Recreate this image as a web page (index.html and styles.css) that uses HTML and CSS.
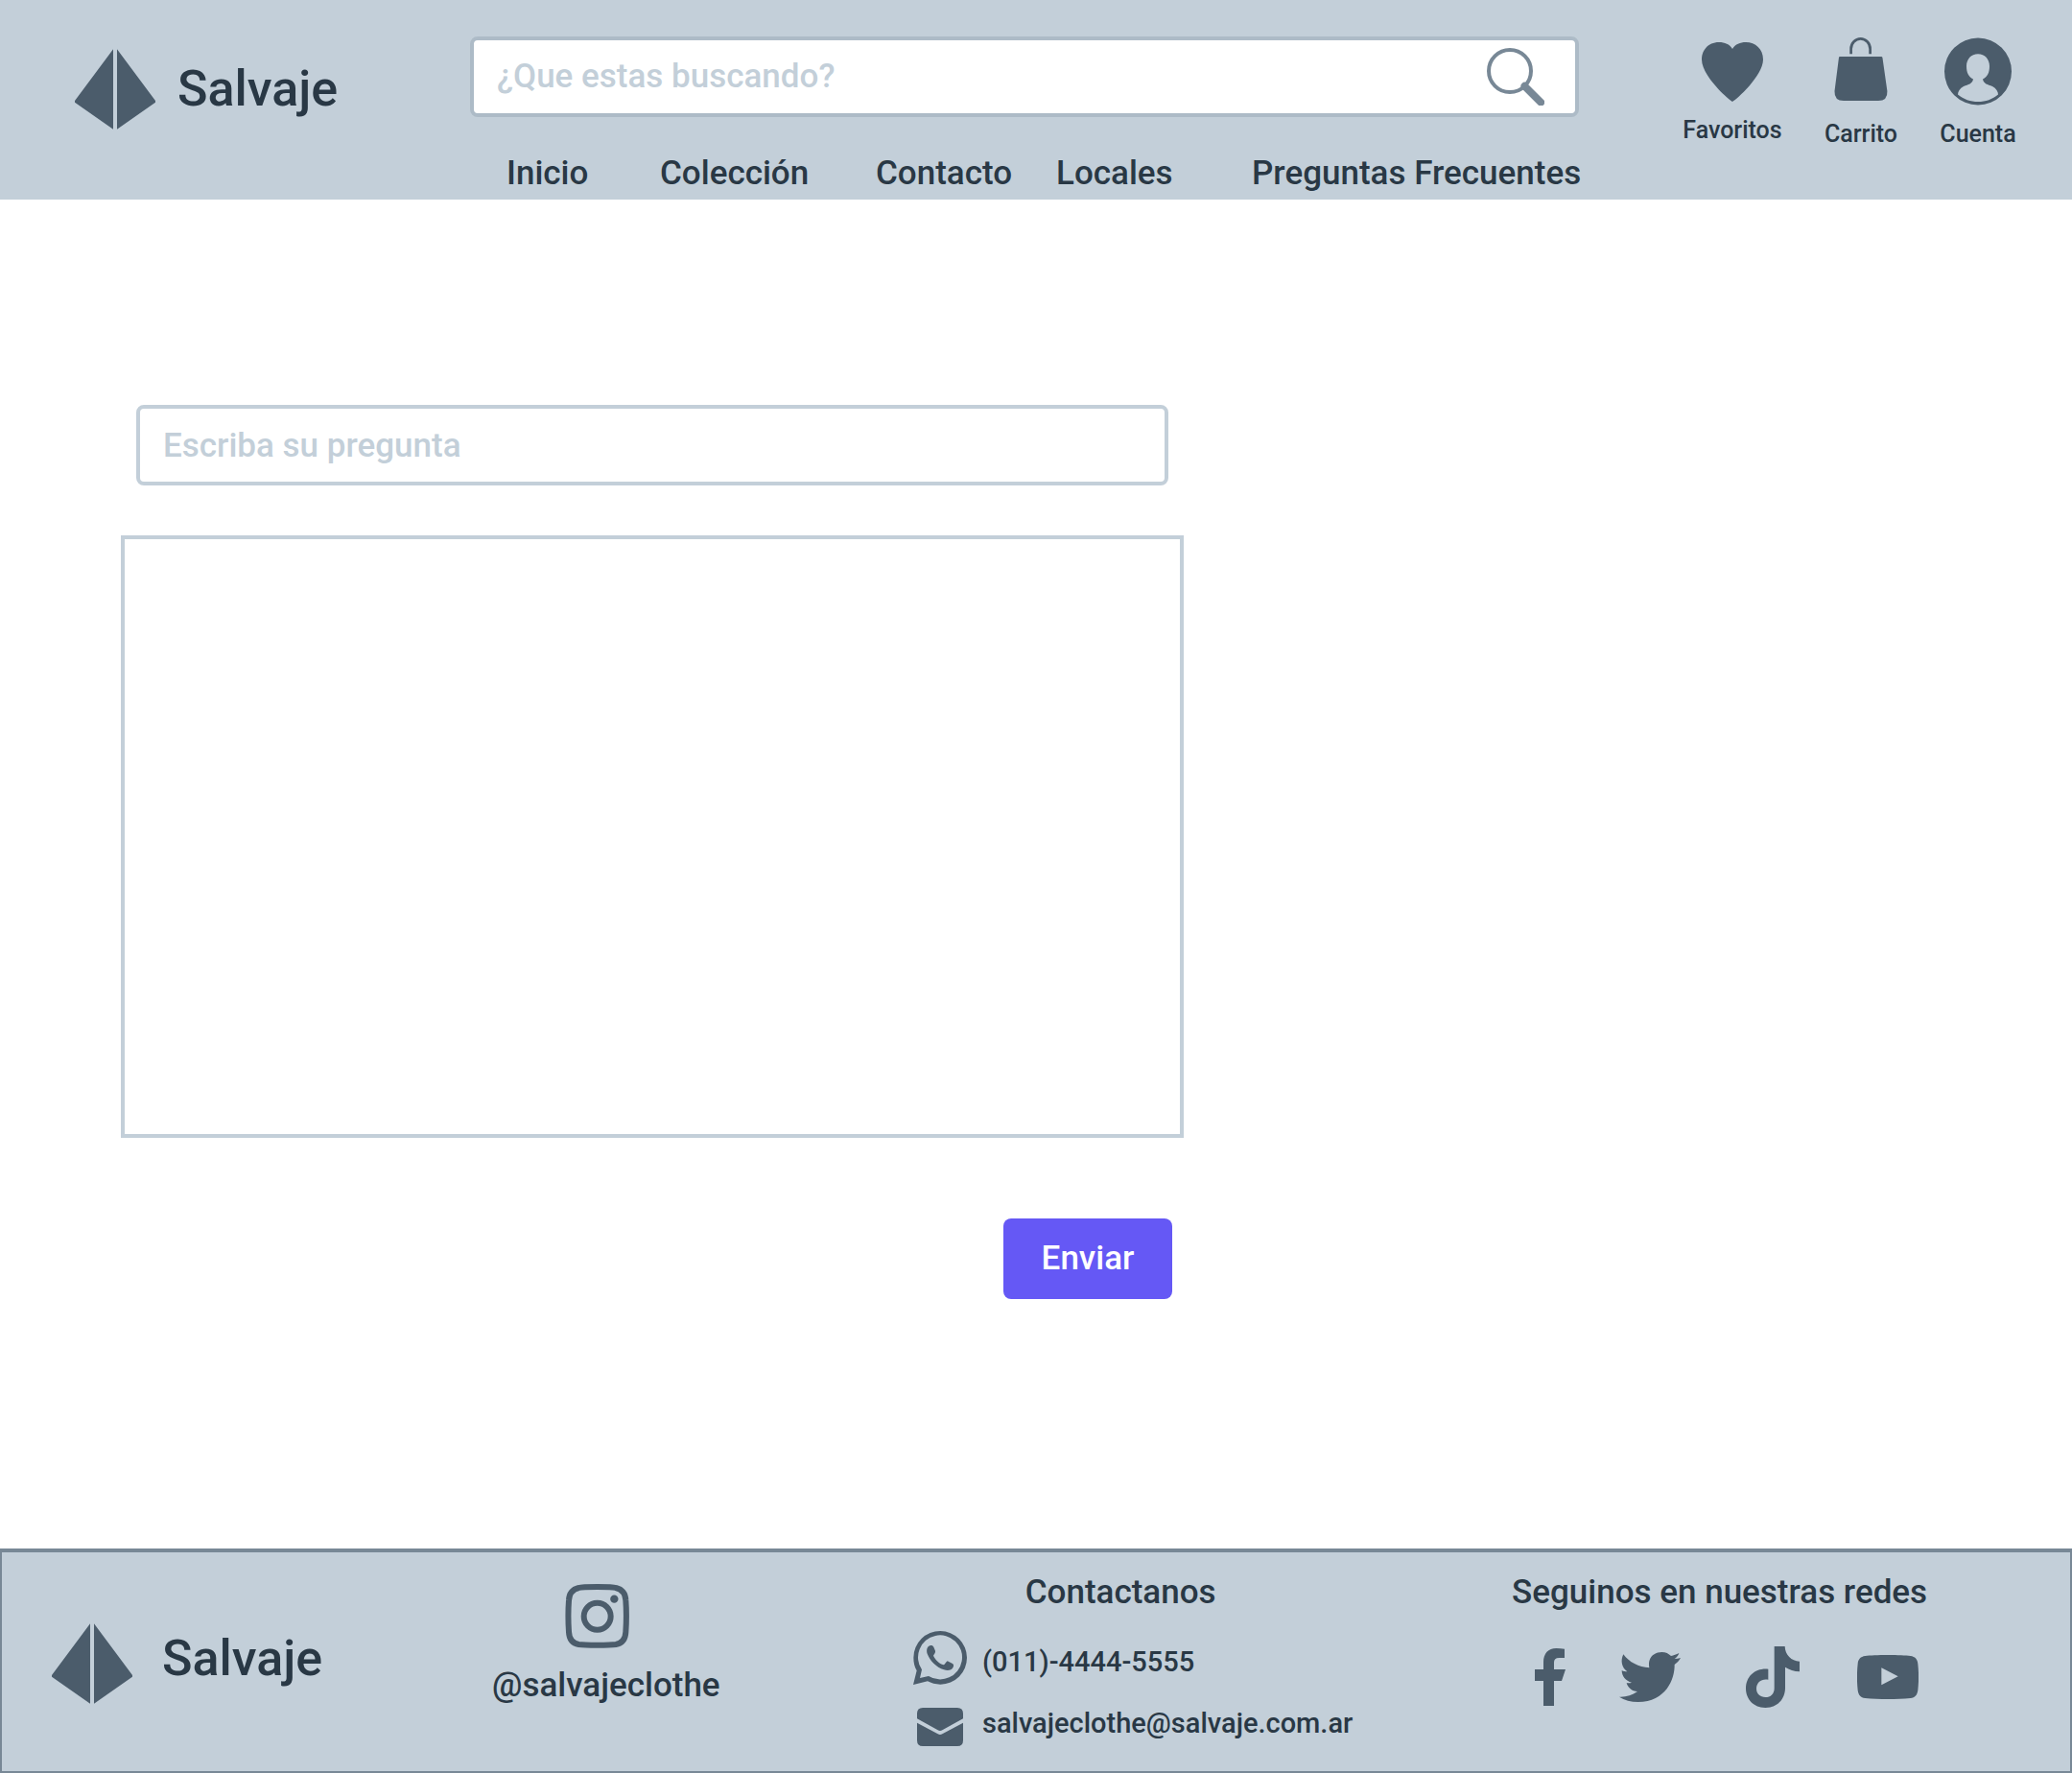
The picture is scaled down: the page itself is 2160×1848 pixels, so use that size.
FILE: index.html
```html
<!DOCTYPE html>
<html lang="es">
<head>
  <meta charset="utf-8">
  <meta name="viewport" content="width=device-width, initial-scale=1">
  <title>Salvaje - Preguntas Frecuentes</title>
  <link rel="stylesheet" href="styles.css">
</head>
<body>
  <header class="header">
    <a class="brand" href="#">
      <svg class="brand-mark" viewBox="234 155 252 250" aria-hidden="true"><path d="M354 155V405L234 321V316ZM366 155L486 316V321L366 405Z"/></svg>
      <span class="brand-name">Salvaje</span>
    </a>
    <div class="header-center">
      <form class="search" role="search">
        <input class="search-input" type="search" aria-label="Buscar" placeholder="¿Que estas buscando?">
        <button class="search-button" type="submit" aria-label="Buscar">
          <svg class="search-icon" viewBox="60 59 180 180" aria-hidden="true"><circle cx="132" cy="131" r="66" stroke-width="12"/><path d="M178 178L229 229" stroke-width="23" stroke-linecap="round"/></svg>
        </button>
      </form>
      <nav class="nav">
        <a href="#">Inicio</a>
        <a href="#">Colección</a>
        <a href="#">Contacto</a>
        <a href="#">Locales</a>
        <a href="#">Preguntas Frecuentes</a>
      </nav>
    </div>
    <div class="actions">
      <a class="action action-favorites" href="#">
        <svg width="64" height="62" viewBox="0 0 64 62" aria-hidden="true"><path d="M32 62C28 60 0 35 0 18C0 7 8 0 18 0C24 0 29 2 32 7C35 2 40 0 46 0C56 0 64 7 64 18C64 35 36 60 32 62Z"/></svg>
        Favoritos
      </a>
      <a class="action" href="#">
        <svg width="56" height="71" viewBox="0 0 56 71" aria-hidden="true"><path d="M17.6 17.3V12A10 10.6 0 0 1 37.6 12V17.3" fill="none" stroke="currentColor" stroke-width="2.7"/><path d="M6 20H49Q50.4 20 50.5 21.4L55.4 56Q56 66 46 66H10Q0 66 .5 56L4.9 21.4Q5 20 6 20Z"/></svg>
        Carrito
      </a>
      <a class="action" href="#">
        <svg width="70" height="71" viewBox="0 0 70 70" aria-hidden="true"><path fill-rule="evenodd" d="M35 0A35 35 0 1 1 35 70A35 35 0 1 1 35 0ZM35 16.7C28 16.7 23 22 23 29.5C23 36 25 40.5 30 43C29 48 25 48.500 20 50.500C16 52.500 14 56 14 59C20 64 27 66.500 35 66.500C43 66.500 50 64 56 59C56 56 54 52.500 50 50.500C45 48.500 41 48 40 43C45 40.500 47 36 47 29.500C47 22 42 16.700 35 16.700Z"/></svg>
        Cuenta
      </a>
    </div>
  </header>

  <main class="main">
    <form class="question">
      <input class="question-title" type="text" aria-label="Pregunta" placeholder="Escriba su pregunta">
      <textarea class="question-body" aria-label="Detalle de la pregunta"></textarea>
      <button class="submit" type="submit">Enviar</button>
    </form>
  </main>

  <footer class="footer">
    <a class="brand footer-brand" href="#">
      <svg class="brand-mark" viewBox="234 155 252 250" aria-hidden="true"><path d="M354 155V405L234 321V316ZM366 155L486 316V321L366 405Z"/></svg>
      <span class="brand-name">Salvaje</span>
    </a>
    <a class="instagram" href="#">
      <svg class="instagram-icon" width="67" height="67" viewBox="325 61 201 201" aria-hidden="true"><g fill="none" stroke="currentColor" stroke-width="18"><path d="M426 70C455 70 475 70 484 73C504 78 514 90 515 112C517 140 517 182 515 211C514 233 504 246 484 250C465 253 387 253 368 250C348 246 338 233 337 211C335 182 335 140 337 112C338 90 348 78 368 73C377 70 397 70 426 70Z"/><circle cx="426" cy="162" r="42"/></g><circle cx="479" cy="108" r="12.500"/></svg>
      @salvajeclothe
    </a>
    <section class="contact">
      <h2 class="footer-title">Contactanos</h2>
      <a class="contact-row contact-phone" href="#">
        <svg width="56" height="56" viewBox="96 240 168 168" aria-hidden="true"><path fill-rule="evenodd" d="M96 408L107 364C100 352 97 338 97 323A83.500 83.500 0 1 1 181 407C166 407 152 403 141 397ZM117 387L144 381A69 69 0 1 0 123 361Z"/><path d="M150 285C154 284 158 286 160 290L165 302C167 307 160 313 159 317C166 331 177 342 191 346C195 345 198 337 203 334L219 342C223 344 223 349 221 353C216 362 206 365 192 361C168 353 148 332 140 311C136 299 140 287 150 285Z"/></svg>
        <span>(011)-4444-5555</span>
      </a>
      <a class="contact-row contact-mail" href="#">
        <svg width="56" height="40" viewBox="96 480 168 120" aria-hidden="true"><path d="M126 480H234Q252 480 252 498V514L187 550Q180 554 173 550L108 514V498Q108 480 126 480ZM108 527L173 562Q180 566 187 562L252 527V582Q252 600 234 600H126Q108 600 108 582Z"/></svg>
        <span>salvajeclothe@salvaje.com.ar</span>
      </a>
    </section>
    <section class="social">
      <h2 class="footer-title">Seguinos en nuestras redes</h2>
      <div class="social-links">
        <a href="#" aria-label="Facebook"><svg width="32" height="60" viewBox="30 54 96 180" aria-hidden="true"><path d="M57 234V156H30V120H57V98C57 70 72 54 97 54Q111 54 123 56V84H106C95 84 90 89 90 98V120H126L114 156H90V234Z"/></svg></a>
        <a href="#" aria-label="Twitter"><svg width="64" height="52" viewBox="294 66 192 156" aria-hidden="true"><path d="M307 73C325 98 355 113 388 115C386 105 387 96 389 91C394 75 410 66 427 66C439 66 449 71 456 78C464 77 473 73 481 69C479 77 474 82 467 87C474 87 480 86 486 84C482 93 474 100 467 105C468 150 440 222 353 222C331 222 310 216 294 206C314 207 334 202 351 189C334 188 321 178 317 162C322 163 328 163 333 161C314 156 302 141 302 123C307 126 313 127 319 127C302 115 297 93 307 73Z"/></svg></a>
        <a href="#" aria-label="TikTok"><svg width="56" height="64" viewBox="690 48 168 192" aria-hidden="true"><path d="M779 48H812C813 75 832 94 858 95V127C841 126 826 121 813 113V178C813 214 788 240 751 240C715 240 690 213 690 180C690 141 720 115 760 119V152C740 148 723 160 723 180C723 196 735 207 751 207C768 207 779 196 779 179Z"/></svg></a>
        <a href="#" aria-label="YouTube"><svg width="64" height="46" viewBox="1038 75 192 138" aria-hidden="true"><path fill-rule="evenodd" d="M1134 75C1165 75 1190 76 1205 78C1219 80 1227 88 1228 103C1231 130 1231 158 1228 185C1226 200 1219 208 1205 210C1160 214 1108 214 1063 210C1049 208 1042 200 1040 185C1037 158 1037 130 1040 103C1041 88 1049 80 1063 78C1078 76 1103 75 1134 75ZM1114 115V169L1166 142Z"/></svg></a>
      </div>
    </section>
  </footer>
</body>
</html>
```
FILE: styles.css
```css
:root {
  --surface: #c3cfd9;
  --icon: #4b5c6b;
  --text: #293845;
  --muted: #788896;
  --accent: #6558f5;
}

* {
  box-sizing: border-box;
}

body {
  display: flex;
  flex-direction: column;
  min-height: 100vh;
  margin: 0;
  background: #fff;
  color: var(--text);
  font: 500 35px/42px Roboto, "Liberation Sans", sans-serif;
}

a {
  color: inherit;
  text-decoration: none;
  white-space: nowrap;
}

input,
textarea,
button {
  font: inherit;
  color: inherit;
}

input::placeholder {
  color: var(--surface);
  opacity: 1;
}

svg {
  display: block;
  flex: none;
  color: var(--icon);
  fill: currentColor;
}

/* Brand */
.brand {
  display: flex;
  align-items: center;
  gap: 23px;
}

.brand-mark {
  width: 84px;
  height: 84px;
}

.brand-name {
  font-size: 52px;
  line-height: 60px;
}

/* Header */
.header {
  display: grid;
  grid-template-columns: 412px minmax(0, 1fr) auto;
  align-items: start;
  padding: 38px 58px 6px 78px;
  background: var(--surface);
}

.header .brand {
  padding-top: 13px;
}

.search {
  display: flex;
  height: 84px;
  border: 4px solid #adbbc7;
  border-radius: 8px;
  background: #fff;
}

.search-input {
  flex: 1;
  min-width: 0;
  padding: 0 24px;
  border: 0;
  background: none;
  outline: 0;
}

.search-button {
  display: flex;
  align-items: center;
  padding: 0 32px;
  border: 0;
  background: none;
}

.search-icon {
  width: 60px;
  height: 60px;
  fill: none;
  stroke: var(--muted);
}

.nav {
  display: grid;
  grid-template-columns: 160px 225px 188px 204px auto;
  padding: 38px 0 0 38px;
}

.actions {
  display: grid;
  grid-template-columns: 104px 80px 80px;
  align-items: start;
  gap: 42px;
  padding: 1px 0 0 108px;
}

.action {
  display: flex;
  flex-direction: column;
  align-items: center;
  gap: 15px;
  font-size: 25px;
  line-height: 30px;
}

.action-favorites {
  padding-top: 5px;
}

/* Question form */
.main {
  flex: 1;
  padding: 214px 126px 120px;
}

.question {
  display: flex;
  flex-direction: column;
  max-width: 1108px;
}

.question-title {
  height: 84px;
  margin: 0 16px 52px;
  padding: 0 24px;
  border: 4px solid var(--surface);
  border-radius: 8px;
}

.question-body {
  min-height: 628px;
  padding: 20px;
  border: 4px solid var(--surface);
  border-radius: 0;
  resize: none;
}

.submit {
  align-self: flex-end;
  width: 176px;
  height: 84px;
  margin: 84px 12px 0;
  border: 0;
  border-radius: 8px;
  background: var(--accent);
  color: #fff;
}

/* Footer */
.footer {
  display: grid;
  grid-template-columns: 459fr 439fr 624fr 582fr;
  align-items: start;
  padding: 21px 0 26px 52px;
  border: 2px solid var(--muted);
  border-top-width: 4px;
  background: var(--surface);
}

.footer-brand {
  gap: 31px;
  padding-top: 53px;
}

.footer-brand .brand-name {
  padding-bottom: 10px;
}

.footer-title {
  margin: 0;
  font: inherit;
}

.instagram {
  display: flex;
  flex-direction: column;
  justify-self: start;
  gap: 18px;
  padding-top: 12px;
}

.instagram-icon {
  margin-left: 76px;
}

.contact {
  display: flex;
  flex-direction: column;
  justify-self: start;
}

.contact .footer-title {
  padding: 0 26px 19px 0;
  text-align: center;
}

.contact-row {
  display: flex;
  align-items: center;
  gap: 16px;
  font-size: 29px;
  line-height: 32px;
}

.contact-phone span {
  padding-top: 8px;
}

.contact-mail {
  padding-top: 24px;
}

.contact-mail span {
  padding-bottom: 8px;
}

.social-links {
  display: grid;
  grid-template-columns: 88px 132px 116px 64px;
  align-items: center;
  padding: 35px 0 0 24px;
}
```
